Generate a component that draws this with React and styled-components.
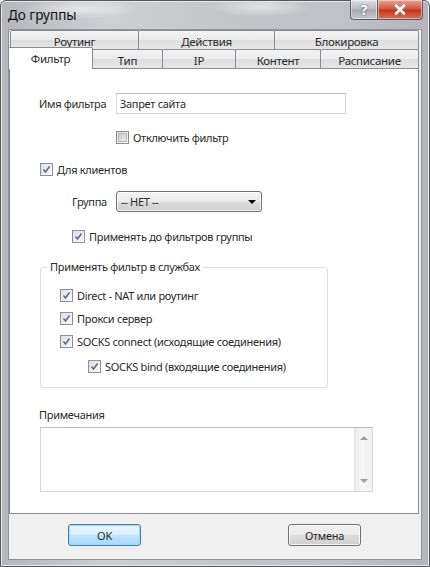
import React from 'react'
import styled, { createGlobalStyle } from 'styled-components'

const GlobalStyle = createGlobalStyle`
  html, body {
    margin: 0;
    padding: 0;
  }
  body {
    width: 430px;
    height: 567px;
    overflow: hidden;
    background: #fff;
    font-family: "Noto Sans", "Liberation Sans", sans-serif;
    font-size: 11px;
    letter-spacing: -0.3px;
    color: #2a2a2a;
  }
`

const Window = styled.div`
  width: 430px;
  height: 567px;
  box-sizing: border-box;
  display: flex;
  flex-direction: column;
  padding: 0 7px 6px 7px;
  border: 1px solid #55585c;
  border-radius: 6px 6px 0 0;
  background:
    radial-gradient(ellipse 60px 10px at 80px 8px, rgba(255,255,255,0.55), transparent),
    radial-gradient(ellipse 50px 10px at 260px 6px, rgba(255,255,255,0.5), transparent),
    linear-gradient(90deg, #b4b7bb, #cdd0d3 25%, #c3c6c9 55%, #bfc2c6 80%, #b2b5b9);
  box-shadow: inset 0 0 0 1px #e6e8ea;
`

const TitleBar = styled.div`
  height: 28px;
  flex: none;
  display: flex;
  align-items: flex-start;
  justify-content: space-between;
`

const Title = styled.span`
  margin-top: 5px;
  font-size: 13.5px;
  letter-spacing: 0;
  color: #111;
`

const CaptionButtons = styled.div`
  display: flex;
  margin-top: -1px;
  margin-right: -1px;
`

const CaptionButton = styled.div`
  width: ${p => p.$w}px;
  height: 20px;
  box-sizing: border-box;
  display: flex;
  align-items: center;
  justify-content: center;
  border: 1px solid #5a5d62;
  border-top: none;
  border-left: ${p => (p.$close ? 'none' : '1px solid #5a5d62')};
  border-radius: ${p => (p.$close ? '0 0 4px 0' : '0 0 0 4px')};
  background: ${p => (p.$close
    ? 'linear-gradient(#e8a594, #d1593f 45%, #c2361b 55%, #d8735a)'
    : 'linear-gradient(#dfe2e5, #b9bdc2 45%, #a6abb1 55%, #c7cbcf)')};
  color: #fff;
  font-weight: bold;
  font-size: 14px;
  text-shadow: 0 0 2px rgba(0,0,0,0.6);
  box-shadow: inset 0 0 0 1px rgba(255,255,255,0.45);
`

const Client = styled.div`
  flex: 1;
  display: flex;
  flex-direction: column;
  background: #f0f0f0;
  border: 1px solid #8e9297;
  padding: 0 2px 0 0;
`

const TabRow = styled.div`
  display: flex;
  height: 19px;
  padding-left: ${p => p.$indent}px;
  position: relative;
`

const Tab = styled.div`
  width: ${p => p.$w}px;
  box-sizing: border-box;
  margin-left: -1px;
  display: flex;
  justify-content: center;
  padding-top: 3px;
  border: 1px solid #898c95;
  border-bottom: none;
  border-radius: 2px 2px 0 0;
  background: linear-gradient(#f3f3f3, #ebebeb 50%, #dedede 51%, #e6e6e6);
  font-size: 11.5px;
  white-space: nowrap;

  &:first-child {
    margin-left: ${p => (p.$selected ? -1 : 0)}px;
  }

  ${p => p.$selected && `
    position: relative;
    z-index: 2;
    height: 22px;
    margin-top: -2px;
    padding-top: 3px;
    background: #fff;
  `}
`

const Panel = styled.div`
  height: 446px;
  box-sizing: border-box;
  background: #fff;
  border: 1px solid #898c95;
  padding: 24px 0 0 29px;
  display: flex;
  flex-direction: column;
`

const FieldRow = styled.div`
  display: flex;
  align-items: center;
  margin-top: ${p => p.$top || 0}px;
  padding-left: ${p => p.$indent || 0}px;
`

const FieldLabel = styled.span`
  width: ${p => p.$w}px;
  flex: none;
  white-space: nowrap;
`

const TextInput = styled.div`
  width: 230px;
  height: 21px;
  box-sizing: border-box;
  border: 1px solid #d3d6da;
  border-top-color: #b9bbc0;
  padding: 2px 3px;
`

const CheckRow = styled.label`
  display: flex;
  align-items: center;
  height: 16px;
  margin-top: ${p => p.$top || 0}px;
  padding-left: ${p => p.$indent || 0}px;
  white-space: nowrap;
`

const Box = styled.span`
  width: 13px;
  height: 13px;
  flex: none;
  box-sizing: border-box;
  margin-right: 4px;
  border: 1px solid #8f8f8f;
  background: linear-gradient(135deg, #dcdfe3, #fafafa);
  display: flex;
  align-items: center;
  justify-content: center;
`

const BoxInner = styled.span`
  width: 9px;
  height: 9px;
  background: linear-gradient(135deg, #c3c7cd, #f1f1f1);
  border: 1px solid #b4b8be;
  box-sizing: border-box;
`

const Select = styled.div`
  width: 146px;
  height: 21px;
  box-sizing: border-box;
  border: 1px solid #707070;
  border-radius: 3px;
  background: linear-gradient(#f4f4f4, #ebebeb 50%, #dddddd 51%, #cfcfcf);
  box-shadow: inset 0 0 0 1px rgba(255,255,255,0.7);
  display: flex;
  align-items: center;
  justify-content: space-between;
  padding: 0 5px 0 4px;
`

const Arrow = styled.span`
  width: 0;
  height: 0;
  border-left: 4px solid transparent;
  border-right: 4px solid transparent;
  border-top: 4px solid #000;
`

const GroupBox = styled.fieldset`
  width: 288px;
  box-sizing: border-box;
  margin: 16px 0 0 1px;
  padding: 13px 0 13px 19px;
  border: 1px solid #d5dfe5;
  border-radius: 3px;
`

const Legend = styled.legend`
  margin-left: -13px;
  padding: 0 3px;
  line-height: 14px;
`

const Memo = styled.div`
  width: 333px;
  height: 65px;
  box-sizing: border-box;
  margin: 5px 0 0 1px;
  border: 1px solid #d3d6da;
  border-top-color: #b9bbc0;
  display: flex;
  justify-content: flex-end;
`

const ScrollBar = styled.div`
  width: 17px;
  background: linear-gradient(90deg, #e9e9e9, #f7f7f7 40%, #f0f0f0);
  border-left: 1px solid #e3e3e3;
  display: flex;
  flex-direction: column;
  justify-content: space-between;
  align-items: center;
  padding: 8px 0;
`

const ScrollArrow = styled.span`
  width: 0;
  height: 0;
  border-left: 4px solid transparent;
  border-right: 4px solid transparent;
  ${p => (p.$up
    ? 'border-bottom: 4px solid #a0a0a0;'
    : 'border-top: 4px solid #a0a0a0;')}
`

const Footer = styled.div`
  flex: 1;
  display: flex;
  align-items: flex-start;
  padding: 10px 0 0 59px;
  gap: 147px;
`

const Button = styled.div`
  width: 73px;
  height: 22px;
  box-sizing: border-box;
  display: flex;
  align-items: center;
  justify-content: center;
  border-radius: 3px;
  border: 1px solid ${p => (p.$default ? '#3c7fb1' : '#707070')};
  background: ${p => (p.$default
    ? 'linear-gradient(#eaf6fd, #d9f0fc 50%, #bee6fd 51%, #a7d9f5)'
    : 'linear-gradient(#f2f2f2, #ebebeb 50%, #dddddd 51%, #cfcfcf)')};
  box-shadow: inset 0 0 0 1px ${p => (p.$default ? '#9fdcf7' : 'rgba(255,255,255,0.8)')};
`

const CheckMark = () => (
  <svg width="9" height="9" viewBox="0 0 9 9">
    <path d="M1.5 4.5 L3.5 7 L7.5 1.5" fill="none" stroke="#55698c" strokeWidth="1.5" />
  </svg>
)

const Checkbox = ({ checked, children, top, indent }) => (
  <CheckRow $top={top} $indent={indent}>
    <Box>
      {checked ? <CheckMark /> : <BoxInner />}
    </Box>
    {children}
  </CheckRow>
)

const HelpIcon = () => <span>?</span>

const CloseIcon = () => (
  <svg width="14" height="11" viewBox="0 0 14 11">
    <path d="M3 1.5 L11 9.5 M11 1.5 L3 9.5" stroke="#fff" strokeWidth="2.6" strokeLinecap="round" />
  </svg>
)

const App = () => {
  const topTabs = [
    { title: 'Роутинг', w: 129 },
    { title: 'Действия', w: 137 },
    { title: 'Блокировка', w: 145 },
  ]
  const bottomTabs = [
    { title: 'Фильтр', w: 85, selected: true },
    { title: 'Тип', w: 71 },
    { title: 'IP', w: 74 },
    { title: 'Контент', w: 86 },
    { title: 'Расписание', w: 99 },
  ]

  return (
    <>
      <GlobalStyle />
      <Window>
        <TitleBar>
          <Title>До группы</Title>
          <CaptionButtons>
            <CaptionButton $w={28}><HelpIcon /></CaptionButton>
            <CaptionButton $w={45} $close><CloseIcon /></CaptionButton>
          </CaptionButtons>
        </TitleBar>
        <Client>
          <TabRow $indent={1}>
            {topTabs.map(t => <Tab key={t.title} $w={t.w}>{t.title}</Tab>)}
          </TabRow>
          <TabRow $indent={0}>
            {bottomTabs.map(t => (
              <Tab key={t.title} $w={t.w} $selected={t.selected}>{t.title}</Tab>
            ))}
          </TabRow>
          <Panel>
            <FieldRow>
              <FieldLabel $w={77}>Имя фильтра</FieldLabel>
              <TextInput>Запрет сайта</TextInput>
            </FieldRow>
            <Checkbox top={15} indent={77}>Отключить фильтр</Checkbox>
            <Checkbox checked top={16} indent={1}>Для клиентов</Checkbox>
            <FieldRow $top={14} $indent={33}>
              <FieldLabel $w={44}>Группа</FieldLabel>
              <Select>
                <span>-- НЕТ --</span>
                <Arrow />
              </Select>
            </FieldRow>
            <Checkbox checked top={16} indent={33}>Применять до фильтров группы</Checkbox>
            <GroupBox>
              <Legend>Применять фильтр в службах</Legend>
              <Checkbox checked>Direct - NAT или роутинг</Checkbox>
              <Checkbox checked top={7}>Прокси сервер</Checkbox>
              <Checkbox checked top={7}>SOCKS connect (исходящие соединения)</Checkbox>
              <Checkbox checked top={9} indent={28}>SOCKS bind (входящие соединения)</Checkbox>
            </GroupBox>
            <FieldRow $top={19}>
              <FieldLabel $w={200}>Примечания</FieldLabel>
            </FieldRow>
            <Memo>
              <ScrollBar>
                <ScrollArrow $up />
                <ScrollArrow />
              </ScrollBar>
            </Memo>
          </Panel>
          <Footer>
            <Button $default>OK</Button>
            <Button>Отмена</Button>
          </Footer>
        </Client>
      </Window>
    </>
  )
}

export default App
